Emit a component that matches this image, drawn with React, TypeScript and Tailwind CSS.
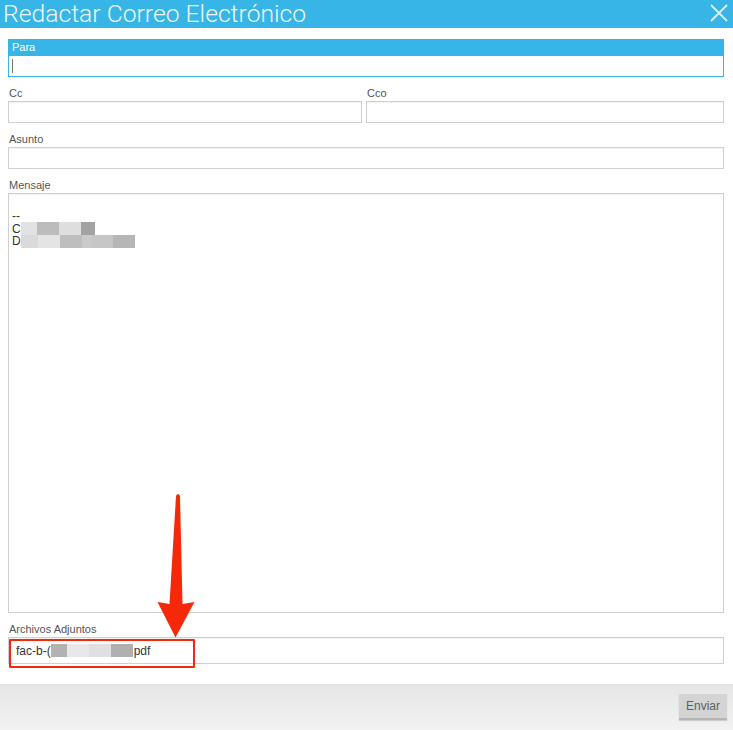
import React from "react";

const label = "block h-[15px] text-[11px] leading-[15px] text-[#555] pl-[1px]";
const inputCls = "block w-full border border-[#d0d0d0] bg-white shadow-[inset_0_1px_1px_rgba(0,0,0,0.06)]";

function Blocks({ items }: { items: [number, string][] }) {
  return (
    <span className="inline-flex h-[13px] align-middle">
      {items.map(([w, c], i) => (
        <span key={i} style={{ width: w, background: c }} className="h-full inline-block" />
      ))}
    </span>
  );
}

export default function App() {
  return (
    <div className="relative w-[733px] h-[730px] bg-white overflow-hidden" style={{ fontFamily: '"Liberation Sans", Arial, sans-serif' }}>
      {/* Title bar */}
      <div className="h-[28px] bg-[#36b5e6] flex items-center justify-between pl-[3px] pr-[5px]">
        <span className="text-[24.7px] leading-[28px] text-[#eef8fd] font-light" style={{ fontFamily: 'Roboto, sans-serif' }}>
          Redactar Correo Electrónico
        </span>
        <svg width="18" height="18" viewBox="0 0 18 18" className="mt-[-2px]">
          <path d="M1 1 L17 17 M17 1 L1 17" stroke="#d8f0fb" strokeWidth="1.8" fill="none" />
        </svg>
      </div>

      <div className="pl-[8px] pr-[9px]">
        {/* Para */}
        <div className="mt-[11px] bg-[#36b5e6] border border-[#36b5e6]">
          <div className="h-[16px] text-[11px] leading-[15px] text-white pl-[3px]">Para</div>
          <div className="h-[20px] bg-white flex items-center pl-[2px]">
            <span className="w-[1px] h-[14px] bg-[#777] ml-[1px]" />
          </div>
        </div>

        {/* Cc / Cco */}
        <div className="mt-[9px] flex gap-[4px]">
          <div className="w-[354px] shrink-0">
            <span className={label}>Cc</span>
            <div className={`${inputCls} h-[22px]`} />
          </div>
          <div className="flex-1">
            <span className={label}>Cco</span>
            <div className={`${inputCls} h-[22px]`} />
          </div>
        </div>

        {/* Asunto */}
        <div className="mt-[9px]">
          <span className={label}>Asunto</span>
          <div className={`${inputCls} h-[22px]`} />
        </div>

        {/* Mensaje */}
        <div className="mt-[9px]">
          <span className={label}>Mensaje</span>
          <div className={`${inputCls} h-[420px] pt-[16px] pl-[3px] text-[12px] leading-[12.5px] text-[#333]`}>
            <div>--</div>
            <div className="flex items-center h-[12.5px]">
              <span>C</span>
              <Blocks items={[[16, "#e2e2e2"], [22, "#bcbcbc"], [22, "#dedede"], [14, "#a2a2a2"]]} />
            </div>
            <div className="flex items-center h-[12.5px]">
              <span>D</span>
              <Blocks items={[[17, "#dadada"], [22, "#e4e4e4"], [22, "#bebebe"], [9, "#cacaca"], [22, "#c6c6c6"], [22, "#b6b6b6"]]} />
            </div>
          </div>
        </div>

        {/* Archivos */}
        <div className="mt-[9px]">
          <span className={label}>Archivos Adjuntos</span>
          <div className={`${inputCls} h-[27px] flex items-center pl-[7px] text-[12px] text-[#333]`}>
            <span>fac-b-(</span>
            <Blocks items={[[16, "#b2b2b2"], [22, "#e8e8e8"], [22, "#e0e0e0"], [22, "#b0b0b0"]]} />
            <span className="ml-[1px]">pdf</span>
          </div>
        </div>
      </div>

      {/* Footer */}
      <div className="absolute left-0 right-0 bottom-0 h-[46px] bg-gradient-to-b from-[#e6e6e6] to-[#f2f2f2] flex items-center justify-end pr-[6px]">
        <button className="w-[48px] h-[26px] bg-[#d4d4d4] border-b-[2px] border-[#b5b5b5] text-[12px] text-[#606060] shadow-[0_1px_1px_rgba(0,0,0,0.15)]" style={{ fontFamily: '"Liberation Sans", Arial, sans-serif' }}>
          Enviar
        </button>
      </div>

      {/* Annotation overlay */}
      <div className="absolute left-[9px] top-[639px] w-[186px] h-[29px] border-[2.5px] border-[#f5290a] rounded-[1px]" />
      <svg className="absolute left-0 top-0 pointer-events-none" width="733" height="730">
        <path d="M176 496 Q178 492 180 496 L182.5 604 L194.5 602 L175.5 637.5 L157.5 602 L169.5 604 Z" fill="#f5290a" />
      </svg>
    </div>
  );
}
